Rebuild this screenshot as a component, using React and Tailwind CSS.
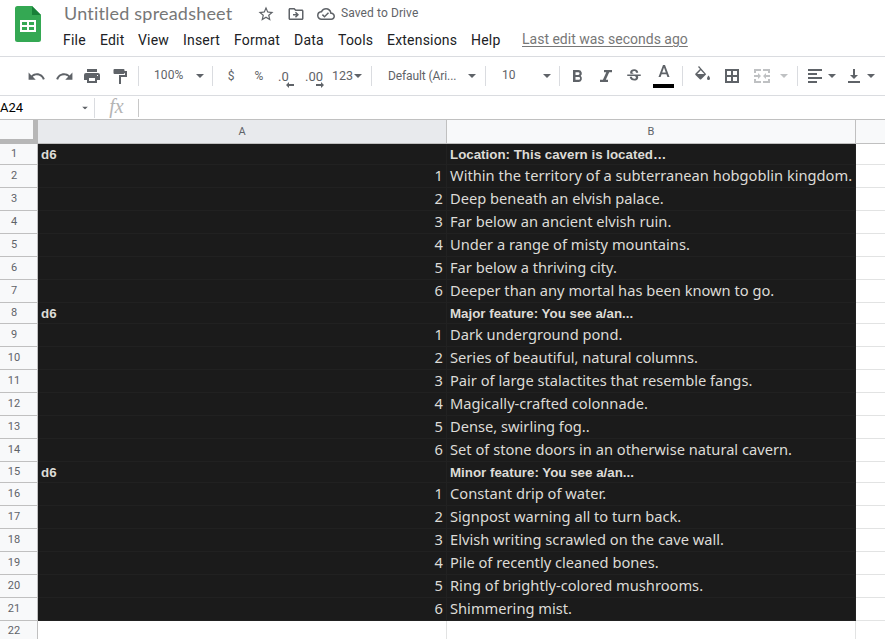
import React from "react";
import { MdUndo, MdRedo, MdStarBorder, MdOutlineDriveFileMove, MdOutlineCloudDone, MdStrikethroughS } from "react-icons/md";

const ROWS = [
  ["d6", "Location: This cavern is located…"],
  [1, "Within the territory of a subterranean hobgoblin kingdom."],
  [2, "Deep beneath an elvish palace."],
  [3, "Far below an ancient elvish ruin."],
  [4, "Under a range of misty mountains."],
  [5, "Far below a thriving city."],
  [6, "Deeper than any mortal has been known to go."],
  ["d6", "Major feature: You see a/an..."],
  [1, "Dark underground pond."],
  [2, "Series of beautiful, natural columns."],
  [3, "Pair of large stalactites that resemble fangs."],
  [4, "Magically-crafted colonnade."],
  [5, "Dense, swirling fog.."],
  [6, "Set of stone doors in an otherwise natural cavern."],
  ["d6", "Minor feature: You see a/an..."],
  [1, "Constant drip of water."],
  [2, "Signpost warning all to turn back."],
  [3, "Elvish writing scrawled on the cave wall."],
  [4, "Pile of recently cleaned bones."],
  [5, "Ring of brightly-colored mushrooms."],
  [6, "Shimmering mist."],
];

const MENUS = [
  ["File", "w-[37px]"],
  ["Edit", "w-[38px]"],
  ["View", "w-[45px]"],
  ["Insert", "w-[51px]"],
  ["Format", "w-[60px]"],
  ["Data", "w-11"],
  ["Tools", "w-[49px]"],
  ["Extensions", "w-[84px]"],
  ["Help", "w-[51px]"],
];

function Slot({ w, children, className = "" }) {
  return <div className={`${w} flex h-full shrink-0 items-center justify-center ${className}`}>{children}</div>;
}

function Sep() {
  return <div className="h-5 w-px shrink-0 bg-[#dadce0]" />;
}

function Caret({ className = "text-[#5f6368]" }) {
  return (
    <svg viewBox="0 0 8 4" className={`h-1 w-2 shrink-0 ${className}`} fill="currentColor">
      <path d="M0 0h8L4 4z" />
    </svg>
  );
}

function Icon({ children, className = "" }) {
  return (
    <svg viewBox="0 0 18 18" className={`size-[18px] shrink-0 ${className}`} fill="currentColor" fillRule="evenodd">
      {children}
    </svg>
  );
}

function Logo() {
  return (
    <svg viewBox="0 0 26 36" className="h-9 w-[26px]">
      <path d="M2.500 0H17l9 9v24.500a2.500 2.500 0 0 1-2.500 2.500h-21A2.500 2.500 0 0 1 0 33.500V2.500A2.500 2.500 0 0 1 2.500 0z" fill="#34a853" />
      <path d="M17 0l9 9h-9z" fill="#188038" />
      <path fillRule="evenodd" fill="#fff" d="M5 14h16v12H5zM7 16v3h5v-3zM14 16v3h5v-3zM7 21v3h5v-3zM14 21v3h5v-3z" />
    </svg>
  );
}

function Header() {
  return (
    <header className="flex h-[57px] shrink-0 border-b border-[#dadce0]">
      <div className="w-[63px] shrink-0 pl-[15px] pt-1.5">
        <Logo />
      </div>
      <div className="flex flex-col">
        <div className="flex h-[27px] items-center">
          <div className="w-[193px] whitespace-nowrap pb-0.5 pl-px font-[Lato,sans-serif] text-[18px] leading-6 tracking-[0.2px] text-[#777]">
            Untitled spreadsheet
          </div>
          <div className="flex items-center text-[#5f6368]">
            <MdStarBorder className="ml-px size-[18px]" />
            <MdOutlineDriveFileMove className="ml-3 size-[18px]" />
            <MdOutlineCloudDone className="ml-3 size-[18px]" />
            <span className="-mt-0.5 ml-1.5 whitespace-nowrap text-xs tracking-[0.1px] text-[#5f6368]">Saved to Drive</span>
          </div>
        </div>
        <nav className="flex h-[26px] items-center whitespace-nowrap text-sm tracking-[0.2px] text-[#202124]">
          {MENUS.map(([label, w]) => (
            <div key={label} className={`${w} shrink-0`}>{label}</div>
          ))}
          <span className="-mt-0.5 tracking-normal text-[#777] underline underline-offset-2">Last edit was seconds ago</span>
        </nav>
      </div>
    </header>
  );
}

function Toolbar() {
  return (
    <div className="flex h-[39px] shrink-0 items-center border-b border-[#dadce0] pl-[22px] text-xs text-[#5f6368]">
      <Slot w="w-7" className="pl-px"><MdUndo className="size-[19px]" /></Slot>
      <Slot w="w-7"><MdRedo className="size-[19px]" /></Slot>
      <Slot w="w-7">
        <Icon><path d="M4 2h10v3H4zM3 6h12a2 2 0 0 1 2 2v5h-3v3H4v-3H1V8a2 2 0 0 1 2-2zM6 11v3h6v-3zM14 8v1h1V8z" /></Icon>
      </Slot>
      <Slot w="w-8" className="pr-1">
        <Icon><path d="M3.500 2h9a1 1 0 0 1 1 1v1H16v6h-6v7H8V8h6V6h-.5a1 1 0 0 1-1 1h-9a1 1 0 0 1-1-1V3a1 1 0 0 1 1-1z" /></Icon>
      </Slot>
      <Sep />
      <div className="w-[57px] pb-0.5 pl-[15px] tracking-[0.1px]">100%</div>
      <Slot w="w-4" className="pr-2"><Caret /></Slot>
      <Sep />
      <Slot w="w-9">$</Slot>
      <Slot w="w-[18px]" className="pl-0.5">%</Slot>
      <div className="flex h-full w-[38px] items-center pl-[11px] pt-px text-[13px]">
        <div className="relative">
          .0
          <svg viewBox="0 0 8 6" className="absolute -bottom-[3px] left-2 h-1.5 w-2" fill="currentColor"><path d="M3 0v2h5v2H3v2L0 3z" /></svg>
        </div>
      </div>
      <div className="flex h-full w-[27px] items-center pt-px text-[13px]">
        <div className="relative">
          .00
          <svg viewBox="0 0 8 6" className="absolute -bottom-[3px] left-[11px] h-1.5 w-2" fill="currentColor"><path d="M5 0v2H0v2h5v2l3-3z" /></svg>
        </div>
      </div>
      <div className="w-[22px] text-[12.500px]">123</div>
      <Slot w="w-[17px]" className="pr-[9px]"><Caret /></Slot>
      <Sep />
      <div className="w-[92px] whitespace-nowrap pl-4 text-xs tracking-[-0.1px]">Default (Ari...</div>
      <Slot w="w-[21px]" className="pr-[5px]"><Caret /></Slot>
      <Sep />
      <div className="w-[53px] pb-0.5 pl-4">10</div>
      <Slot w="w-5" className="pr-[4px]"><Caret /></Slot>
      <Sep />
      <Slot w="w-[34px]" className="pl-0.5">
        <Icon><path d="M4 3h5.500a3.300 3.300 0 0 1 2.200 5.800A3.600 3.600 0 0 1 10 15H4zM6.500 5.200v2.700h2.700a1.350 1.350 0 0 0 0-2.700zM6.500 10v2.800h3.200a1.400 1.400 0 0 0 0-2.800z" /></Icon>
      </Slot>
      <Slot w="w-6"><Icon><path d="M7 3h8v2.200h-2.800L8.800 12.800H11V15H3v-2.200h2.900l3.400-7.600H7z" /></Icon></Slot>
      <Slot w="w-8"><MdStrikethroughS className="size-[18px]" /></Slot>
      <div className="flex h-full w-[27px] shrink-0 flex-col items-center pt-[9px]">
        <svg viewBox="0 0 12 12" className="-mt-px mb-px h-3 w-3 shrink-0" fill="currentColor" fillRule="evenodd"><path d="M5 0h2l4.500 12H9.400l-1-2.800H3.600l-1 2.800H.5zM6 2.400L4.200 7.400h3.600z" /></svg>
        <div className="mt-1.5 h-1 w-[21px] shrink-0 bg-black" />
      </div>
      <div className="w-[5px]" />
      <Sep />
      <Slot w="w-9" className="pb-0.5 pl-[3px]"><Icon><path d="M5 0L4 1l2 2-4.500 4.500a1 1 0 0 0 0 1.400l4.300 4.300a1 1 0 0 0 1.400 0l5-5zM6.800 4.200L10.300 8H3.200zM14.500 9.500s-1.500 1.900-1.500 3a1.500 1.500 0 0 0 3 0c0-1.100-1.500-3-1.500-3z" /></Icon></Slot>
      <Slot w="w-[26px]"><Icon><path d="M2 2h14v14H2zM4 4v4h4V4zM10 4v4h4V4zM4 10v4h4v-4zM10 10v4h4v-4z" /></Icon></Slot>
      <Slot w="w-[34px]" className="text-[#bfc1c3]">
        <Icon><path d="M1 2h7v2H3v2H1zM10 2h7v4h-2V4h-5zM1 12h2v2h5v2H1zM10 14h5v-2h2v4h-7zM1 8h4V6l3 3-3 3v-2H1zM17 8h-4V6l-3 3 3 3v-2h4z" /></Icon>
      </Slot>
      <Slot w="w-[18px]" className="pr-2"><Caret className="text-[#bfc1c3]" /></Slot>
      <Sep />
      <Slot w="w-[30px]" className="pl-1"><Icon><path d="M2 2h14v2H2zM2 6h9v2H2zM2 10h14v2H2zM2 14h9v2H2z" /></Icon></Slot>
      <Slot w="w-2"><Caret /></Slot>
      <Slot w="w-[31px]" className="pl-[5px]"><Icon><path d="M8 2h2v6h3l-4 4-4-4h3zM3 14h12v2H3z" /></Icon></Slot>
      <Slot w="w-2"><Caret /></Slot>
    </div>
  );
}

function FormulaBar() {
  return (
    <div className="flex h-6 shrink-0 items-center border-b border-[#c0c0c0]">
      <div className="w-20 text-[13px] text-black">A24</div>
      <Slot w="w-[14px]" className="pr-[5px]"><Caret className="scale-75 text-[#5f6368]" /></Slot>
      <div className="h-5 w-px bg-[#dadce0]" />
      <div className="w-[43px] pb-1 text-center font-['Liberation_Serif',serif] text-[20px] italic leading-5 text-[#b4b4b4]">fx</div>
      <div className="h-[18px] w-px bg-[#c8c8c8]" />
    </div>
  );
}

function SheetRow({ n, a, b }) {
  const heading = a === "d6";
  const filled = a !== undefined;
  const tone = filled ? "bg-[#1b1b1b] text-[#dddbd7] border-[#212121]" : "border-[#e2e3e3]";
  const face = heading
    ? "font-['Liberation_Sans',Arial,sans-serif] text-[13.333px] font-bold pt-0.5"
    : "font-['Noto_Sans',sans-serif] text-[14.667px] pb-0.5";
  return (
    <div className={`flex shrink-0 ${heading || !filled ? "h-[21px]" : "h-[23px]"}`}>
      <div className="flex w-[38px] items-center justify-center border-b border-r border-[#c0c0c0] bg-[#f8f9fa] pr-[9px] text-[11px] text-[#5f6368]">
        {n}
      </div>
      <div className={`flex w-[409px] items-center border-b border-r px-[3px] leading-5 ${tone} ${face} ${heading ? "" : "justify-end"}`}>{a}</div>
      <div className={`flex w-[409px] items-center whitespace-nowrap border-b border-r pl-[3px] leading-5 ${tone} ${face}`}>{b}</div>
      <div className="flex-1 border-b border-[#e2e3e3]" />
    </div>
  );
}

export default function App() {
  return (
    <div className="flex h-[639px] w-[885px] flex-col overflow-hidden bg-white font-[Roboto,sans-serif]">
      <Header />
      <Toolbar />
      <FormulaBar />
      <div className="flex h-6 shrink-0 text-[11px] text-[#5f6368]">
        <div className="w-[38px] border-b-[5px] border-r-[5px] border-[#b7b7b7] bg-[#f8f9fa]" />
        <div className="flex w-[409px] items-center justify-center border-b border-r border-[#c0c0c0] bg-[#e8eaed] pt-0.5">A</div>
        <div className="flex w-[409px] items-center justify-center border-b border-r border-[#c0c0c0] bg-[#f8f9fa] pt-0.5">B</div>
        <div className="flex-1 border-b border-[#c0c0c0] bg-[#f8f9fa]" />
      </div>
      {ROWS.map(([a, b], i) => (
        <SheetRow key={i} n={i + 1} a={a} b={b} />
      ))}
      <SheetRow n={22} />
    </div>
  );
}
